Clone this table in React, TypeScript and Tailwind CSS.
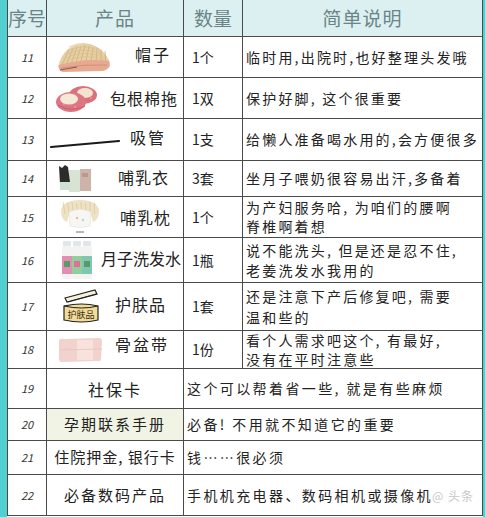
import React from "react";

const Hat = () => (
  <svg width="57" height="32" viewBox="0 0 57 32">
    <path d="M3 26 Q8 4 28 3 Q48 3 55 22 L52 27 Q30 22 6 29 Z" fill="#e8cfa6" />
    {Array.from({ length: 10 }).map((_, i) => (
      <line key={i} x1={6 + i * 5} y1={26 - (i < 5 ? i * 1.5 : (9 - i) * 1.5)} x2={14 + i * 4} y2={4 + Math.abs(i - 4) * 1.2} stroke="#c9b37a" strokeWidth="0.8" />
    ))}
    {Array.from({ length: 5 }).map((_, i) => (
      <path key={i} d={`M${6 + i * 2} ${22 - i * 4} Q30 ${10 - i * 3} ${52 - i * 2} ${20 - i * 3}`} stroke="#d7be8a" strokeWidth="0.7" fill="none" />
    ))}
    <path d="M4 24 Q30 17 54 20 L55 25 Q52 30 46 30 L8 31 Q3 30 4 24 Z" fill="#e7a990" />
    <path d="M6 27 Q30 23 52 24" stroke="#c98a74" strokeWidth="0.8" fill="none" />
    <path d="M5 29 L22 26" stroke="#6b4a3a" strokeWidth="0.8" />
  </svg>
);

const Slippers = () => (
  <svg width="44" height="30" viewBox="0 0 44 30">
    <ellipse cx="28" cy="12" rx="14" ry="9" fill="#d9717d" />
    <ellipse cx="30" cy="10" rx="8" ry="5" fill="#f3e4cf" />
    <ellipse cx="16" cy="19" rx="15" ry="10" fill="#dd7682" />
    <ellipse cx="14" cy="16" rx="9" ry="5.5" fill="#f5e8d6" />
    <path d="M3 22 Q16 30 30 23" stroke="#c55d6a" strokeWidth="1" fill="none" />
    <circle cx="9" cy="21" r="0.8" fill="#f0b6bd" />
    <circle cx="20" cy="24" r="0.8" fill="#f0b6bd" />
    <circle cx="36" cy="15" r="0.8" fill="#f0b6bd" />
  </svg>
);

const Straw = () => (
  <svg width="70" height="10" viewBox="0 0 70 10">
    <line x1="1" y1="8" x2="69" y2="2" stroke="#1a1a1a" strokeWidth="2.2" strokeLinecap="round" />
  </svg>
);

const Clothes = () => (
  <svg width="36" height="30" viewBox="0 0 36 30">
    <rect x="12" y="6" width="11" height="22" fill="#d9e3d3" />
    <rect x="23" y="5" width="11" height="22" fill="#cdb3aa" />
    <rect x="25" y="9" width="6" height="4" fill="#b99a90" />
    <path d="M2 2 L5 4 L8 1 L11 3 L13 18 L3 20 Z" fill="#2b2b2b" />
    <rect x="3" y="18" width="10" height="8" fill="#cfe0d3" />
  </svg>
);

const Pillow = () => (
  <svg width="46" height="38" viewBox="0 0 46 38">
    <path d="M4 12 Q6 2 23 2 Q40 2 42 12 Q42 22 36 24 Q34 12 23 11 Q12 12 10 24 Q4 22 4 12 Z" fill="#eee2c4" />
    {Array.from({ length: 8 }).map((_, i) => (
      <line key={i} x1={6 + i * 4.5} y1={4 + (i % 2)} x2={8 + i * 4.2} y2={16} stroke="#d9c79e" strokeWidth="0.7" />
    ))}
    <path d="M12 14 Q23 9 34 14 L33 28 Q23 31 13 28 Z" fill="#f8f6f3" stroke="#e7e1d8" strokeWidth="0.6" />
    <circle cx="20" cy="20" r="1.2" fill="#eab7b7" />
    <circle cx="26" cy="22" r="1.2" fill="#b7d3ea" />
    <rect x="19" y="33" width="8" height="2" fill="#b8b8b8" />
  </svg>
);

const Bottles = () => (
  <svg width="32" height="42" viewBox="0 0 32 42">
    {[0, 10, 20].map((x, i) => (
      <g key={i}>
        <rect x={x + 1} y="2" width="8" height="5" rx="1" fill="#dfe8e6" />
        <rect x={x} y="7" width="10" height="33" rx="2" fill="#f3f4f2" />
        <rect x={x} y="17" width="10" height="18" fill={i === 0 ? "#e18fb0" : i === 1 ? "#8fcf9b" : "#7fc6b3"} />
        <rect x={x + 2} y="22" width="6" height="6" fill={i === 1 ? "#e26e9a" : "#5a9a6a"} />
      </g>
    ))}
  </svg>
);

const Jar = () => (
  <svg width="40" height="36" viewBox="0 0 40 36">
    <path d="M3 9 L33 1 L35 5 L5 13 Z" fill="#f7f0dc" stroke="#222" strokeWidth="1.2" />
    <path d="M6 13 L34 5" stroke="#222" strokeWidth="0.8" />
    <path d="M2 17 Q20 13 36 17 L36 31 Q20 35 2 31 Z" fill="#f1dc98" stroke="#222" strokeWidth="1.2" />
    <path d="M2 17 Q20 21 36 17" stroke="#222" strokeWidth="1" fill="none" />
    <text x="19" y="29" textAnchor="middle" fontSize="9" fontFamily="'Noto Sans CJK SC', sans-serif" fill="#3a2a1a">护肤品</text>
  </svg>
);

const Belt = () => (
  <svg width="46" height="26" viewBox="0 0 46 26">
    <path d="M2 3 Q4 1 8 2 L42 1 Q45 1 45 4 L44 22 Q44 25 40 24 L5 25 Q2 25 2 22 Z" fill="#f2d2cd" />
    <rect x="20" y="3" width="16" height="20" fill="#f7e2de" />
    <path d="M2 13 L45 12" stroke="#e9c1bb" strokeWidth="0.8" />
  </svg>
);

const Num = ({ n }: { n: string }) => (
  <div className="bg-white flex items-center justify-center text-[11px] italic text-[#333]">{n}</div>
);

const Desc = ({ children, lh = "leading-[19px]" }: { children: React.ReactNode; lh?: string }) => (
  <div className={`bg-white flex items-center pl-[3px] text-[14px] tracking-[2.2px] text-[#222] whitespace-nowrap overflow-hidden ${lh}`}>
    <div>{children}</div>
  </div>
);

const Qty = ({ q }: { q: string }) => (
  <div className="bg-white flex items-center pl-[8px] text-[14px] text-[#222]">{q}</div>
);

export default function App() {
  return (
    <div className="w-[485px] h-[517px] bg-white flex font-['Noto_Sans_CJK_SC','Noto_Sans',sans-serif] overflow-hidden">
      <div className="w-[7px] bg-[#52cfd0]" />
      <div className="w-[476px] self-start grid grid-cols-[38px_136px_58px_239px] grid-rows-[36px_40px_40px_41px_35px_40px_44px_47px_37px_39px_31px_33px_40px] gap-px bg-[#4a4a4a] px-px pb-px">
        <div className="bg-[#ddf0f1] flex items-center justify-center text-[19px] text-[#6a8487] whitespace-nowrap overflow-hidden">序号</div>
        <div className="bg-[#ddf0f1] flex items-center justify-center text-[19px] text-[#6a8487] tracking-[1px]">产品</div>
        <div className="bg-[#ddf0f1] flex items-center justify-center text-[19px] text-[#6a8487]">数量</div>
        <div className="bg-[#ddf0f1] flex items-center justify-center text-[19px] text-[#6a8487] tracking-[1px]">简单说明</div>

        {/* 11 */}
        <Num n="11" />
        <div className="bg-white flex items-center justify-between pl-[8px] pr-[12px]">
          <Hat />
          <span className="text-[16px] tracking-[2px] text-[#222] -mt-[6px]">帽子</span>
        </div>
        <Qty q="1个" />
        <Desc>临时用,出院时,也好整理头发哦</Desc>

        {/* 12 */}
        <Num n="12" />
        <div className="bg-white flex items-center justify-between pl-[8px] pr-[5px]">
          <Slippers />
          <span className="text-[16px] tracking-[1px] text-[#222]">包根棉拖</span>
        </div>
        <Qty q="1双" />
        <Desc>保护好脚, 这个很重要</Desc>

        {/* 13 */}
        <Num n="13" />
        <div className="bg-white flex items-center justify-between pl-[3px] pr-[17px]">
          <div className="mt-[8px]"><Straw /></div>
          <span className="text-[16px] tracking-[2px] text-[#222] -mt-[6px]">吸管</span>
        </div>
        <Qty q="1支" />
        <Desc>给懒人准备喝水用的,会方便很多</Desc>

        {/* 14 */}
        <Num n="14" />
        <div className="bg-white flex items-center justify-between pl-[10px] pr-[14px]">
          <Clothes />
          <span className="text-[16px] tracking-[1px] text-[#222] -mt-[4px]">哺乳衣</span>
        </div>
        <Qty q="3套" />
        <Desc>坐月子喂奶很容易出汗,多备着</Desc>

        {/* 15 */}
        <Num n="15" />
        <div className="bg-white flex items-center justify-between pl-[10px] pr-[12px]">
          <Pillow />
          <span className="text-[16px] tracking-[1px] text-[#222]">哺乳枕</span>
        </div>
        <Qty q="1个" />
        <Desc>为产妇服务哈, 为咱们的腰啊<br />脊椎啊着想</Desc>

        {/* 16 */}
        <Num n="16" />
        <div className="bg-white flex items-center justify-between pl-[15px] pr-[2px]">
          <Bottles />
          <span className="text-[16px] text-[#222] -mt-[4px]">月子洗发水</span>
        </div>
        <Qty q="1瓶" />
        <Desc lh="leading-[20px]">说不能洗头, 但是还是忍不住,<br />老姜洗发水我用的</Desc>

        {/* 17 */}
        <Num n="17" />
        <div className="bg-white flex items-center justify-between pl-[15px] pr-[17px]">
          <Jar />
          <span className="text-[16px] tracking-[1px] text-[#222] -mt-[6px]">护肤品</span>
        </div>
        <Qty q="1套" />
        <Desc lh="leading-[21px]">还是注意下产后修复吧, 需要<br />温和些的</Desc>

        {/* 18 */}
        <Num n="18" />
        <div className="bg-white flex items-center justify-between pl-[10px] pr-[14px]">
          <Belt />
          <span className="text-[16px] tracking-[2px] text-[#222] -mt-[12px]">骨盆带</span>
        </div>
        <Qty q="1份" />
        <Desc lh="leading-[19px]">看个人需求吧这个, 有最好,<br />没有在平时注意些</Desc>

        {/* 19 */}
        <Num n="19" />
        <div className="bg-white flex items-center justify-center text-[16px] tracking-[2px] text-[#222]">社保卡</div>
        <div className="col-span-2 bg-white flex items-center pl-[3px] text-[14px] tracking-[2.4px] text-[#222]">这个可以帮着省一些, 就是有些麻烦</div>

        {/* 20 */}
        <Num n="20" />
        <div className="bg-[#f1f4e4] flex items-center justify-center text-[15px] tracking-[2px] text-[#222]">孕期联系手册</div>
        <div className="col-span-2 bg-white flex items-center pl-[3px] text-[14px] tracking-[2.4px] text-[#222]">必备! 不用就不知道它的重要</div>

        {/* 21 */}
        <Num n="21" />
        <div className="bg-white flex items-center justify-center text-[15px] tracking-[1px] text-[#222] whitespace-nowrap">住院押金, 银行卡</div>
        <div className="col-span-2 bg-white flex items-center pl-[3px] text-[14px] tracking-[2.4px] text-[#222]">钱……很必须</div>

        {/* 22 */}
        <Num n="22" />
        <div className="bg-white flex items-center justify-center text-[15px] tracking-[2px] text-[#222]">必备数码产品</div>
        <div className="col-span-2 bg-white flex items-center pl-[3px] text-[14px] tracking-[2.4px] text-[#222] relative">
          手机机充电器、数码相机或摄像机
          <span className="absolute right-[8px] top-[12px] text-[12px] tracking-[1px] text-[#c8c8c8]">@ 头条</span>
        </div>
      </div>
      <div className="w-[2px] bg-[#52cfd0]" />
    </div>
  );
}
